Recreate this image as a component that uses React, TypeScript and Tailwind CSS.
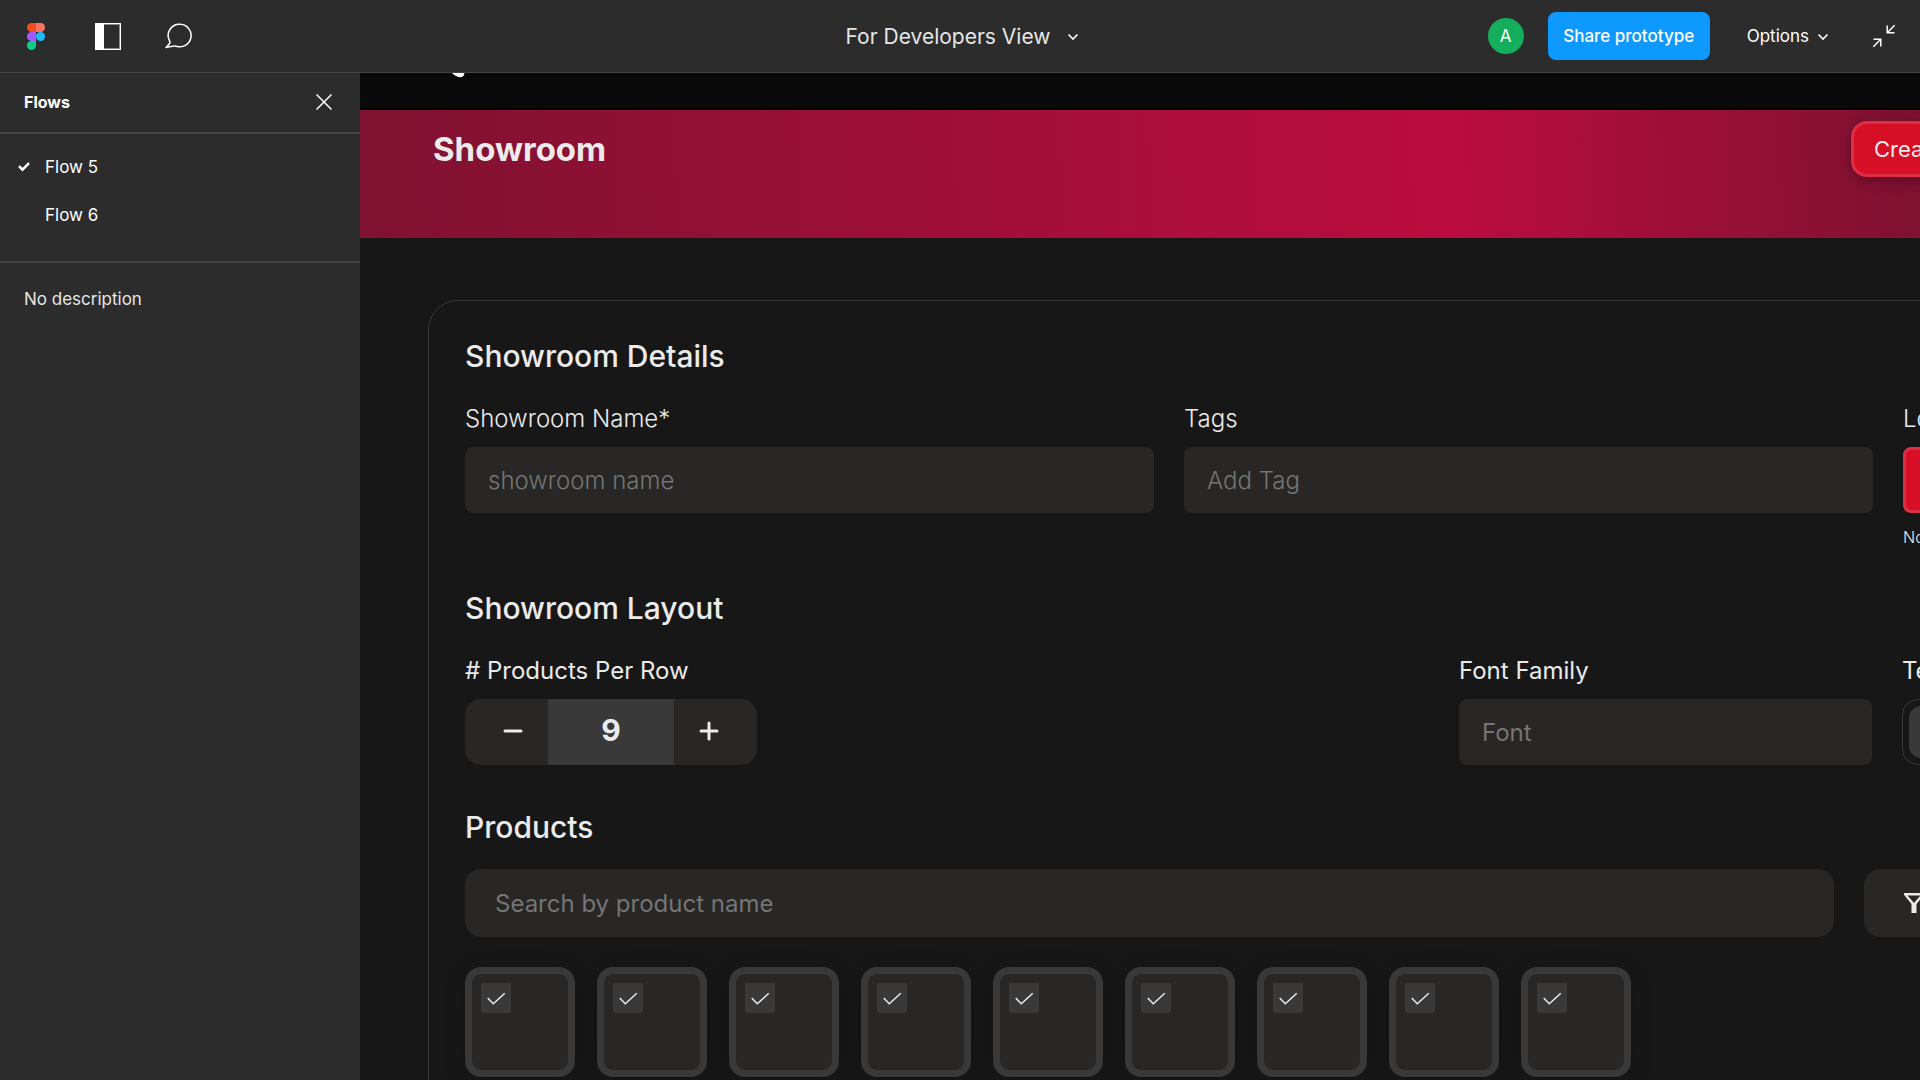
import React from "react";

const labelClass = "text-[24px] leading-[32px] whitespace-nowrap text-[#ebebeb]";
const headingClass = "text-[30px] leading-[36px] font-medium text-[#ebebeb]";
const fieldClass =
  "h-[66px] w-full rounded-lg bg-[#282725] px-[23px] text-[24px] text-[#ebebeb] placeholder:text-[#757575] outline-none";

function FigmaLogo() {
  return (
    <svg width="18" height="27" viewBox="0 0 18 27" aria-hidden="true">
      <path d="M4.5 0H9v9H4.5a4.5 4.5 0 0 1 0-9z" fill="#f24e1e" />
      <path d="M9 0h4.500a4.500 4.500 0 0 1 0 9H9z" fill="#ff7262" />
      <path d="M4.500 9H9v9H4.500a4.500 4.500 0 0 1 0-9z" fill="#a259ff" />
      <circle cx="13.500" cy="13.500" r="4.500" fill="#1abcfe" />
      <path d="M4.500 18H9v4.500A4.500 4.500 0 1 1 4.500 18z" fill="#0acf83" />
    </svg>
  );
}

function Chevron({ className }: { className?: string }) {
  return (
    <svg width="12" height="8" viewBox="0 0 12 8" fill="none" className={className} aria-hidden="true">
      <path d="M1.500 1.500L6 6l4.500-4.500" stroke="currentColor" strokeWidth="1.600" />
    </svg>
  );
}

function TopBar() {
  return (
    <header className="grid h-[73px] shrink-0 grid-cols-[1fr_auto_1fr] items-center border-b border-[#444444] bg-[#2c2c2c] text-white">
      <div className="flex items-center pl-[27px]">
        <button aria-label="Figma menu">
          <FigmaLogo />
        </button>
        <button aria-label="Toggle sidebar" className="ml-[50px]">
          <svg width="26" height="27" viewBox="0 0 26 27" fill="none" aria-hidden="true">
            <rect x="0.500" y="0.500" width="25" height="26" stroke="#fff" />
            <path d="M8 1.500h16.500v24H8" stroke="#fff" strokeOpacity="0.450" />
            <path d="M0 0h9v27H0z" fill="#fff" />
          </svg>
        </button>
        <button aria-label="Comments" className="ml-11">
          <svg width="28" height="26" viewBox="0 0 28 26" fill="none" aria-hidden="true">
            <path
              d="M15.500 1.200a11.300 11.300 0 1 1-3.200 22.300c-1.200-.5-1.800-.6-3-.4l-7.800 1.100 3-3.600c.7-.9.600-1.500.1-2.700A11.300 11.300 0 0 1 15.500 1.200z"
              stroke="#fff"
              strokeWidth="1.500"
            />
          </svg>
        </button>
      </div>
      <button className="flex items-center gap-[17px] pt-0.5 pl-[5px] text-[21px] leading-7 text-[#e6e6e6]">
        For Developers View
        <Chevron className="text-white" />
      </button>
      <div className="flex items-center justify-end pr-6">
        <div className="flex size-9 items-center justify-center rounded-full bg-[#14ae5c] pt-0.5 text-[17px]">A</div>
        <button className="ml-6 h-12 w-[162px] rounded-lg bg-[#0d99ff] pt-0.5 text-[17px] font-medium">
          Share prototype
        </button>
        <button className="ml-[37px] flex items-center gap-2 pt-0.5 text-[17px]">
          Options
          <Chevron />
        </button>
        <button aria-label="Exit full screen" className="ml-[43px]">
          <svg width="24" height="24" viewBox="0 0 24 24" fill="none" stroke="#fff" strokeWidth="1.500" aria-hidden="true">
            <path d="M15.200 1.500v7.300h7.300M15.500 8.500L22.700 1.300" />
            <path d="M1.500 15.200h7.300v7.300M8.500 15.500L1.300 22.700" />
          </svg>
        </button>
      </div>
    </header>
  );
}

function Sidebar() {
  return (
    <aside className="w-[360px] shrink-0 bg-[#2c2c2c] text-[17px] leading-6 text-white">
      <div className="flex h-[61px] items-center justify-between border-b-2 border-[#444444] pr-7 pb-0.5 pl-6">
        <h2 className="text-[16px] font-bold">Flows</h2>
        <button aria-label="Close flows">
          <svg width="16" height="16" viewBox="0 0 16 16" stroke="#fff" strokeWidth="1.500" aria-hidden="true">
            <path d="M0.500 0.500l15 15M15.500 0.500l-15 15" />
          </svg>
        </button>
      </div>
      <ul className="border-b-2 border-[#444444] pt-[9px] pb-[22px]">
        {["Flow 5", "Flow 6"].map((flow, i) => (
          <li key={flow}>
            <button className="flex h-12 w-full items-center pl-[18px]">
              <span className="w-[27px]">
                {i === 0 && (
                  <svg width="12" height="10" viewBox="0 0 12 10" fill="none" stroke="#fff" strokeWidth="2.500" aria-hidden="true">
                    <path d="M1 4.200l3.500 3.500L11 1.200" />
                  </svg>
                )}
              </span>
              {flow}
            </button>
          </li>
        ))}
      </ul>
      <p className="px-6 pt-6 text-[#e6e6e6]">No description</p>
    </aside>
  );
}

function Banner() {
  return (
    <div className="flex h-32 items-start justify-between bg-[linear-gradient(88deg,#7f1131_0%,#bb0c40_59%,#7f1131_84%)] pt-[11px] pr-[68px] pl-[73px]">
      <h1 className="pt-2 text-[33px] leading-[40px] font-bold text-[#ebebeb]">Showroom</h1>
      <button className="h-14 w-[290px] rounded-2xl border-3 border-[#dc2f45] bg-[#d60f26] pl-5 text-left text-[22px] text-[#ebebeb] shadow-[0_3px_14px_rgba(0,0,0,0.3)]">
        Create Showroom
      </button>
    </div>
  );
}

function DetailsSection() {
  return (
    <section>
      <h2 className={headingClass}>Showroom Details</h2>
      <div className="mt-[29px] flex gap-[30px]">
        <div className="flex flex-1 flex-col gap-3">
          <label htmlFor="name" className={`${labelClass} font-light`}>Showroom Name*</label>
          <input id="name" placeholder="showroom name" className={`${fieldClass} font-light`} />
        </div>
        <div className="flex flex-1 flex-col gap-3">
          <label htmlFor="tags" className={`${labelClass} font-light`}>Tags</label>
          <input id="tags" placeholder="Add Tag" className={`${fieldClass} font-light`} />
        </div>
        <div className="flex w-[201px] flex-col gap-3">
          <span className={`${labelClass} font-light`}>Logo</span>
          <button aria-label="Upload logo" className="h-[66px] rounded-lg border-3 border-[#dc2f45] bg-[#d60f26]" />
          <p className="text-[16px] leading-6 font-light text-[#ebebeb]">No file chosen</p>
        </div>
      </div>
    </section>
  );
}

function LayoutSection() {
  return (
    <section className="mt-[41px]">
      <h2 className={headingClass}>Showroom Layout</h2>
      <div className="mt-[29px] flex gap-[30px]">
        <div className="mr-auto flex flex-col gap-3">
          <label htmlFor="perRow" className={labelClass}># Products Per Row</label>
          <div className="flex h-[66px] w-[292px] overflow-hidden rounded-2xl bg-[#282725]">
            <button aria-label="Fewer products" className="flex flex-1 items-center justify-center pb-0.5 pl-[13px]">
              <svg width="20" height="20" viewBox="0 0 20 20" stroke="#ebebeb" strokeWidth="3" strokeLinecap="round" aria-hidden="true">
                <path d="M2 10h16" />
              </svg>
            </button>
            <input
              id="perRow"
              defaultValue="9"
              className="w-[126px] bg-[#393939] pb-1 text-center text-[30px] font-bold text-[#ebebeb] outline-none"
            />
            <button aria-label="More products" className="flex flex-1 items-center justify-center pr-[13px] pb-0.5">
              <svg width="20" height="20" viewBox="0 0 20 20" stroke="#ebebeb" strokeWidth="3" strokeLinecap="round" aria-hidden="true">
                <path d="M2 10h16M10 2v16" />
              </svg>
            </button>
          </div>
        </div>
        <div className="flex w-[413px] flex-col gap-3">
          <label htmlFor="font" className={labelClass}>Font Family</label>
          <input id="font" placeholder="Font" className={fieldClass} />
        </div>
        <div className="flex w-[202px] flex-col gap-3">
          <span className={labelClass}>Text Color</span>
          <button aria-label="Text color" className="h-[66px] rounded-2xl border border-[#393939] p-1.5">
            <span className="block h-full rounded-xl bg-[#393939]" />
          </button>
        </div>
      </div>
    </section>
  );
}

function ProductsSection() {
  return (
    <section className="mt-11">
      <h2 className={headingClass}>Products</h2>
      <div className="mt-6 flex gap-[30px]">
        <input
          aria-label="Search by product name"
          placeholder="Search by product name"
          className="h-[68px] flex-1 rounded-2xl bg-[#282725] px-[30px] text-[24px] text-[#ebebeb] outline-none placeholder:text-[#757575]"
        />
        <button aria-label="Filter" className="flex w-[240px] items-center rounded-2xl bg-[#282725] pl-10">
          <svg width="20" height="20" viewBox="0 0 20 20" aria-hidden="true">
            <path fillRule="evenodd" d="M0 0h20v1.800L12.500 11v9h-5v-9L0 1.800zM3.500 2.500L10 10l6.500-7.500z" fill="#ebebeb" />
          </svg>
        </button>
      </div>
      <div className="mt-[30px] flex gap-[22px]">
        {Array.from({ length: 9 }, (_, i) => (
          <label
            key={i}
            className="relative size-[110px] shrink-0 rounded-2xl border-[7px] border-[#393939] bg-[#282725] p-[9px] shadow-[0_4px_24px_rgba(0,0,0,0.12)]"
          >
            <input
              type="checkbox"
              defaultChecked
              aria-label={`Product ${i + 1}`}
              className="peer block size-[30px] appearance-none rounded-[3px] bg-[#393939]"
            />
            <svg
              width="30"
              height="30"
              viewBox="0 0 30 30"
              fill="none"
              className="pointer-events-none invisible absolute top-[9px] left-[9px] peer-checked:visible"
              aria-hidden="true"
            >
              <path d="M6.700 15l5.600 5.700L23.800 10.300" stroke="#ebebeb" strokeWidth="1.500" />
            </svg>
          </label>
        ))}
      </div>
    </section>
  );
}

export default function App() {
  return (
    <div className="flex h-screen flex-col overflow-hidden bg-[#171717] font-['Inter',sans-serif]">
      <TopBar />
      <div className="flex min-h-0 flex-1">
        <Sidebar />
        <main className="min-w-0 flex-1 overflow-hidden">
          <div className="-mr-[289px]">
            <div className="h-[37px] border-b-2 border-black bg-[#0a0a0a] pl-[92px]">
              <svg width="14" height="5" viewBox="0 0 14 5" aria-hidden="true">
                <path d="M0 0h12.300v1c-.4 2-1.500 3.200-4.300 3.200C5 4 2 2 0 0z" fill="#fff" />
              </svg>
            </div>
            <Banner />
            <div className="px-[68px] pt-[62px]">
              <div className="rounded-[30px] border border-[#393939] px-9 pt-[37px] pb-16">
                <DetailsSection />
                <LayoutSection />
                <ProductsSection />
              </div>
            </div>
          </div>
        </main>
      </div>
    </div>
  );
}
